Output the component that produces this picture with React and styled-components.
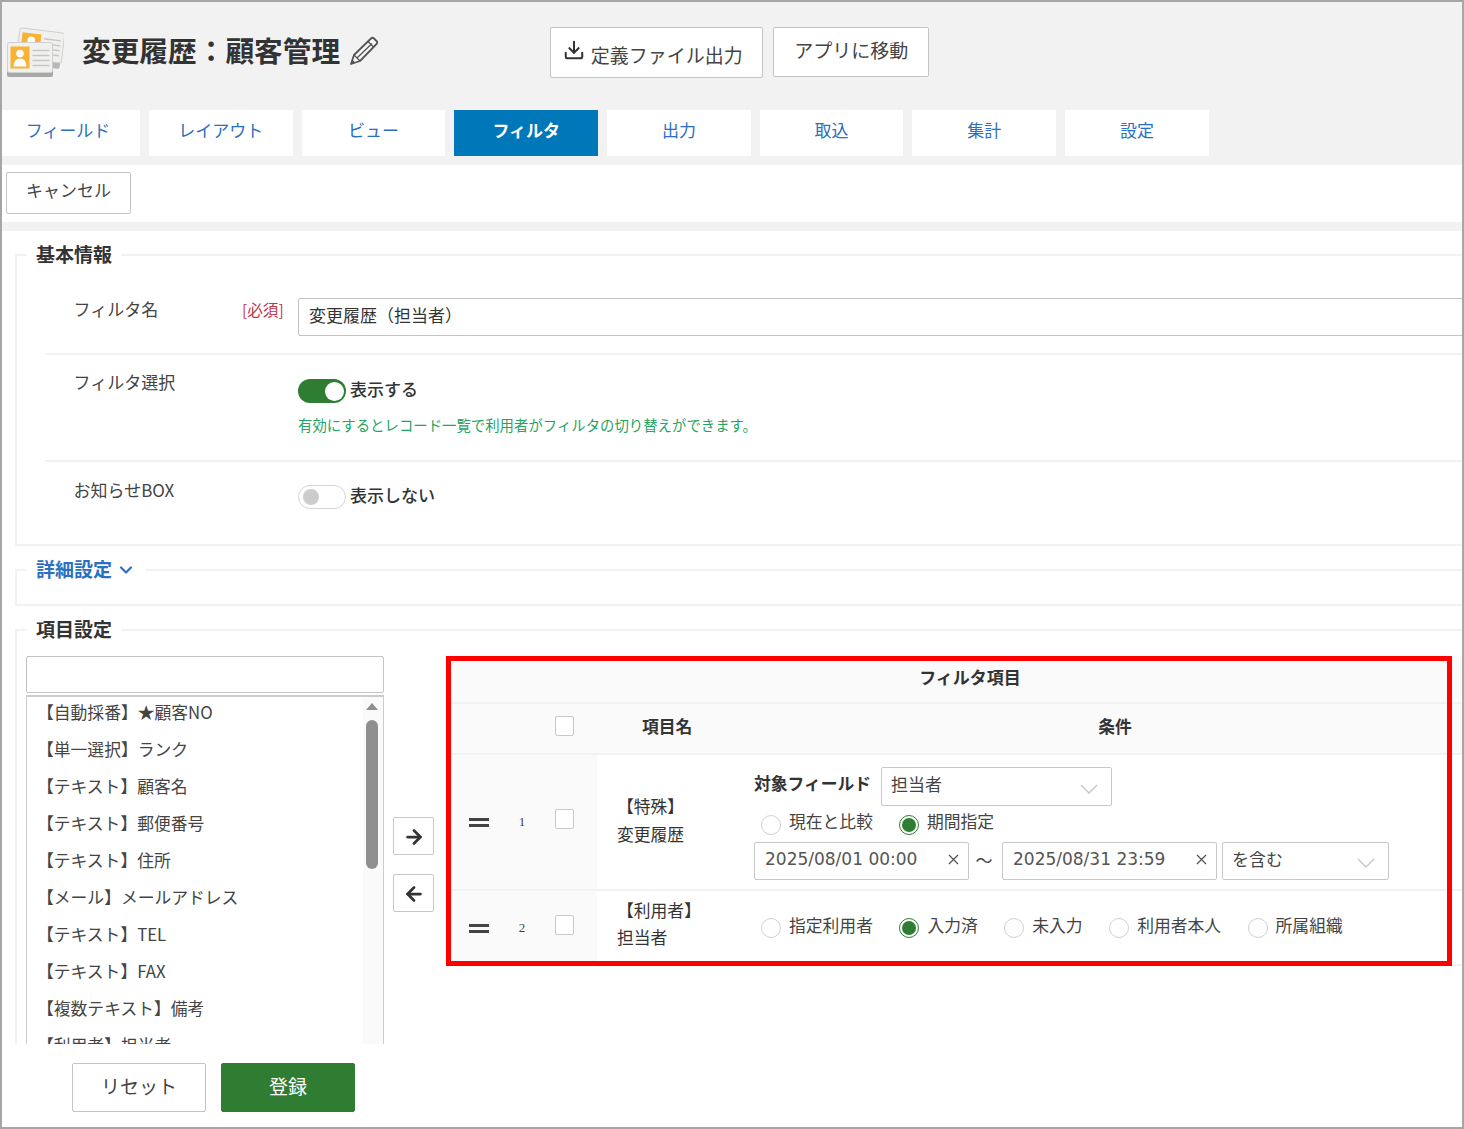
import React from "react"
import styled, { createGlobalStyle } from "styled-components"
import { ArrowLeft, ArrowRight, ChevronDown, Download } from "lucide-react"

const GlobalStyle = createGlobalStyle`
  html, body {
    margin: 0;
    padding: 0;
    background: #fff;
  }
  * {
    box-sizing: border-box;
  }
  body {
    font-family: "Noto Sans CJK JP", "Noto Sans", sans-serif;
    font-size: 17px;
    color: #333;
  }
`

const Page = styled.div`
  width: 1464px;
  height: 1129px;
  border: 2px solid #a6a6a6;
  display: flex;
  flex-direction: column;
  overflow: hidden;
`

const Header = styled.header`
  background: #f2f2f2;
  height: 163px;
  flex: none;
`

const TitleRow = styled.div`
  height: 100px;
  display: flex;
  align-items: center;
  padding-left: 5px;
`

const AppIcon = styled.svg`
  width: 57px;
  height: 50px;
  flex: none;
`

const Title = styled.h1`
  margin: 0 0 4px 18px;
  font-size: 28.7px;
  line-height: 40px;
  font-weight: 700;
  color: #333;
  white-space: nowrap;
`

const PencilIcon = styled.svg`
  width: 30px;
  height: 30px;
  margin: 0 0 3px 9px;
  flex: none;
`

const HeaderActions = styled.div`
  display: flex;
  gap: 10px;
  margin-left: 171px;
`

const Button = styled.button`
  font-family: inherit;
  font-size: ${(p) => p.$size || 19}px;
  line-height: 1;
  height: ${(p) => p.$h || 50}px;
  width: ${(p) => p.$w}px;
  flex: none;
  display: inline-flex;
  align-items: center;
  justify-content: center;
  gap: 6px;
  padding: ${(p) => p.$pad || "0 0 4px"};
  border-radius: 2px;
  border: 1px solid ${(p) => (p.$primary ? "#2e7d32" : "#c4c4c4")};
  background: ${(p) => (p.$primary ? "#2e7d32" : "#fff")};
  color: ${(p) => (p.$primary ? "#fff" : "#444")};

  svg {
    margin-top: -8px;
    flex: none;
  }
`

const Tabs = styled.nav`
  display: flex;
  gap: 9px;
  margin-top: 8px;
`

const Tab = styled.div`
  width: ${(p) => (p.$first ? 138 : 143.7)}px;
  height: 46px;
  display: flex;
  align-items: center;
  justify-content: center;
  padding: 0 ${(p) => (p.$first ? 6 : 0)}px 8px 0;
  font-size: 17px;
  background: ${(p) => (p.$active ? "#0077b9" : "#fff")};
  color: ${(p) => (p.$active ? "#fff" : "#2a6fc0")};
  font-weight: ${(p) => (p.$active ? 700 : 400)};
`

const CancelBar = styled.div`
  height: 66px;
  flex: none;
  padding: 7px 4px 0;
  border-bottom: 9px solid #f2f2f2;
`

const Body = styled.main`
  flex: 1;
  min-height: 0;
  overflow: hidden;
  padding-left: 13px;
`

const Group = styled.fieldset`
  margin: 9px 0 0;
  padding: 0;
  min-width: 0;
  border: 2px solid #f2f2f2;
  border-right: none;
`

const Legend = styled.legend`
  margin-left: 10px;
  padding: 0 9px 4px;
  height: 30px;
  display: flex;
  align-items: center;
  gap: 4px;
  font-size: 19px;
  font-weight: 700;
  color: ${(p) => (p.$link ? "#2a6fc0" : "#333")};

  svg {
    margin-top: 4px;
  }
`

const FormRow = styled.div`
  display: grid;
  grid-template-columns: 197px 56px 1fr;
  margin-left: 28px;
  padding: ${(p) => p.$pad};
  border-bottom: ${(p) => (p.$last ? "none" : "2px solid #f2f2f2")};
`

const RowLabel = styled.div`
  padding-left: 28.5px;
  line-height: 22px;
  font-size: 17px;
  color: #444;
`

const Required = styled.div`
  line-height: 22px;
  font-size: 15.6px;
  color: #c0394b;
`

const TextBox = styled.div`
  height: 38px;
  width: 1200px;
  padding: 0 0 6px 10px;
  display: flex;
  align-items: center;
  border: 1px solid #c4c4c4;
  border-radius: 2px;
  font-size: 17px;
  color: #333;
`

const ToggleLine = styled.div`
  display: flex;
  align-items: flex-start;
  gap: 4px;
  margin-top: ${(p) => p.$top}px;
  font-size: 17px;
  font-weight: 500;
  line-height: 20px;
  color: #333;
`

const Toggle = styled.span`
  width: 48px;
  height: 24px;
  flex: none;
  border-radius: 12px;
  display: flex;
  align-items: center;
  padding: 0 ${(p) => (p.$on ? 2 : 4)}px;
  justify-content: ${(p) => (p.$on ? "flex-end" : "flex-start")};
  background: ${(p) => (p.$on ? "#2e7d32" : "#fff")};
  border: ${(p) => (p.$on ? "none" : "1px solid #d4d4d4")};

  &::after {
    content: "";
    width: ${(p) => (p.$on ? 19 : 16)}px;
    height: ${(p) => (p.$on ? 19 : 16)}px;
    border-radius: 50%;
    background: ${(p) => (p.$on ? "#fff" : "#ccc")};
  }
`

const Help = styled.div`
  margin-top: 12px;
  font-size: 14.4px;
  line-height: 20px;
  color: #1fa463;
  white-space: nowrap;
`

const DetailBody = styled.div`
  height: 19px;
`

const ItemsLayout = styled.div`
  display: flex;
  align-items: flex-start;
  padding: 11px 0 0 9px;
  height: 500px;
`

const FieldPicker = styled.div`
  width: 358px;
  flex: none;
`

const SearchBox = styled.div`
  height: 37px;
  border: 1px solid #c4c4c4;
  border-radius: 2px;
`

const FieldList = styled.div`
  margin-top: 2px;
  height: 440px;
  display: flex;
  border: 1px solid #ccc;
  border-bottom: none;
  border-top-width: 2px;
`

const FieldItems = styled.ul`
  flex: 1;
  margin: 0;
  padding: 0 0 0 10px;
  list-style: none;
`

const FieldItem = styled.li`
  height: 37px;
  line-height: 31px;
  font-size: 16.8px;
  color: #444;
  white-space: nowrap;
`

const Scrollbar = styled.div`
  width: 20px;
  flex: none;
  background: #fafafa;
  padding: 6px 5px 0 3px;
  display: flex;
  flex-direction: column;
  align-items: center;
`

const ScrollUp = styled.span`
  width: 0;
  height: 0;
  border-left: 6px solid transparent;
  border-right: 6px solid transparent;
  border-bottom: 7px solid #8f8f8f;
`

const ScrollThumb = styled.span`
  width: 12px;
  height: 149px;
  margin-top: 10px;
  border-radius: 6px;
  background: #8f8f8f;
`

const MoveButtons = styled.div`
  width: 41px;
  margin: 161px 0 0 9px;
  flex: none;
  display: flex;
  flex-direction: column;
  gap: 19px;
`

const MoveButton = styled.button`
  width: 41px;
  height: 38px;
  padding: 2px 0 0;
  display: flex;
  align-items: center;
  justify-content: center;
  background: #fff;
  border: 1px solid #c8c8c8;
  border-radius: 2px;
  color: #333;
`

const FilterTable = styled.div`
  position: relative;
  flex: 1;
  margin-left: 12px;
  min-width: 0;
`

const RedFrame = styled.div`
  position: absolute;
  top: 0;
  left: 0;
  width: 1006px;
  height: 310px;
  border: 5px solid #ff0000;
  pointer-events: none;
`

const CaptionRow = styled.div`
  height: 48px;
  background: #fafafa;
  border-bottom: 2px solid #f2f2f2;
  padding: 0 0 6px 32px;
  display: flex;
  align-items: center;
  justify-content: center;
  font-size: 17px;
  font-weight: 700;
  color: #333;
`

const TableRow = styled.div`
  display: grid;
  grid-template-columns: 151px 157px 1fr;
  height: ${(p) => p.$h}px;
  background: ${(p) => (p.$head ? "#fafafa" : "#fff")};
  border-bottom: 2px solid #f2f2f2;
`

const HandleCell = styled.div`
  background: #fafafa;
  display: flex;
  align-items: center;
  padding-left: ${(p) => p.$left || 23}px;
`

const DragHandle = styled.span`
  width: 20px;
  height: 9px;
  margin-top: 1px;
  flex: none;
  border-top: 3px solid #444;
  border-bottom: 3px solid #444;
`

const RowNumber = styled.span`
  width: 66px;
  flex: none;
  text-align: center;
  font-family: "Liberation Serif", serif;
  font-size: 13px;
  color: #444;
`

const CheckBox = styled.span`
  width: 19px;
  height: 20px;
  flex: none;
  border: 1px solid #c8c8c8;
  border-radius: 2px;
  background: #fff;
  margin-top: -6px;
`

const NameCell = styled.div`
  display: flex;
  flex-direction: column;
  justify-content: center;
  padding: 0 0 ${(p) => p.$shift}px 20px;
  font-size: 16.8px;
  line-height: ${(p) => p.$lh}px;
  color: #333;
  white-space: nowrap;
`

const HeadName = styled.div`
  display: flex;
  align-items: center;
  padding: 0 0 6px 45px;
  font-size: 16.8px;
  font-weight: 700;
`

const HeadCondition = styled.div`
  display: flex;
  align-items: center;
  justify-content: center;
  padding: 0 0 6px 14px;
  font-size: 16.8px;
  font-weight: 700;
`

const ConditionCell = styled.div`
  padding-top: ${(p) => p.$top || 0}px;
  display: flex;
  flex-direction: column;
  justify-content: ${(p) => (p.$center ? "center" : "flex-start")};
`

const ConditionLine = styled.div`
  display: flex;
  align-items: center;
  gap: ${(p) => p.$gap || 0}px;
  height: ${(p) => p.$h}px;
  padding-left: ${(p) => p.$left || 0}px;
`

const FieldLabel = styled.span`
  width: 127px;
  padding-bottom: 8px;
  font-size: 16.8px;
  font-weight: 700;
  color: #333;
  white-space: nowrap;
`

const SelectBox = styled.div`
  width: ${(p) => p.$w}px;
  height: ${(p) => p.$h}px;
  margin-left: ${(p) => p.$left || 0}px;
  flex: none;
  display: flex;
  align-items: center;
  justify-content: space-between;
  padding: 0 13px 6px 9px;
  border: 1px solid #c8c8c8;
  border-radius: 2px;
  font-size: 17px;
  color: #444;
`

const SelectArrow = styled.svg`
  width: 18px;
  height: 10px;
  margin-top: 10px;
  flex: none;
`

const RadioItem = styled.span`
  display: inline-flex;
  align-items: center;
  font-size: 16.8px;
  color: #444;
  white-space: nowrap;
`

const RadioMark = styled.span`
  width: 20px;
  height: 20px;
  margin: 1px 8px 0 0;
  flex: none;
  border-radius: 50%;
  background: #fff;
  border: ${(p) => (p.$on ? "1px solid #2e7d32" : "1px solid #d0d0d0")};
  display: flex;
  align-items: center;
  justify-content: center;

  &::after {
    content: "";
    width: 14px;
    height: 14px;
    border-radius: 50%;
    background: ${(p) => (p.$on ? "#2e7d32" : "transparent")};
  }
`

const RadioText = styled.span`
  padding-bottom: 6px;
`

const DateBox = styled.div`
  width: 215px;
  height: 38px;
  flex: none;
  display: flex;
  align-items: center;
  justify-content: space-between;
  padding: 0 9px 4px 10px;
  border: 1px solid #c8c8c8;
  border-radius: 2px;
  font-family: "DejaVu Sans", sans-serif;
  font-size: 17px;
  color: #555;
`

const ClearMark = styled.svg`
  width: 11px;
  height: 11px;
  flex: none;
`

const Tilde = styled.span`
  width: 33px;
  padding: 0 3px 4px 0;
  flex: none;
  text-align: center;
  font-size: 17px;
  color: #444;
`

const Footer = styled.footer`
  height: 83px;
  flex: none;
  display: flex;
  gap: 15px;
  padding: 19px 0 0 70px;
  background: #fff;
`

const Radio = ({ on, children }) => (
  <RadioItem>
    <RadioMark $on={on} />
    <RadioText>{children}</RadioText>
  </RadioItem>
)

const Arrow = () => (
  <SelectArrow viewBox="0 0 18 10">
    <polyline points="1,1 9,9 17,1" fill="none" stroke="#c4c4c4" strokeWidth="1.3" />
  </SelectArrow>
)

const Clear = () => (
  <ClearMark viewBox="0 0 11 11">
    <path d="M1 1 L10 10 M10 1 L1 10" stroke="#555" strokeWidth="1.3" />
  </ClearMark>
)

const tabNames = ["フィールド", "レイアウト", "ビュー", "フィルタ", "出力", "取込", "集計", "設定"]

const fieldNames = [
  "【自動採番】★顧客NO",
  "【単一選択】ランク",
  "【テキスト】顧客名",
  "【テキスト】郵便番号",
  "【テキスト】住所",
  "【メール】メールアドレス",
  "【テキスト】TEL",
  "【テキスト】FAX",
  "【複数テキスト】備考",
  "【利用者】担当者",
]

const Card = ({ x, y }) => (
  <g transform={`translate(${x} ${y})`}>
    <rect x="0" y="0" width="45" height="30" rx="2" fill="#f0f0ee" stroke="#d0d0ce" />
    <rect x="3" y="4" width="19" height="22" fill="#f9b233" />
    <circle cx="12.5" cy="11" r="3.8" fill="#fff" />
    <path d="M6 24 Q6.5 16 12.5 16 Q18.5 16 19 24 Z" fill="#fff" />
    <path d="M25 8 H42 M25 13 H42 M25 18 H42 M25 23 H42" stroke="#c6c6c6" strokeWidth="1.4" />
  </g>
)

const App = () => (
  <Page>
    <GlobalStyle />
    <Header>
      <TitleRow>
        <AppIcon viewBox="0 0 57 50">
          <g transform="rotate(7 38 20)">
            <rect x="12" y="7" width="43" height="33" rx="2" fill="#b8b8b8" />
            <Card x="11" y="4" />
          </g>
          <rect x="0" y="18" width="46" height="32" rx="2" fill="#a8a8a8" />
          <Card x="0.5" y="15.5" />
        </AppIcon>
        <Title>変更履歴：顧客管理</Title>
        <PencilIcon viewBox="0 0 30 30">
          <path d="M2 28 L5 19 L22 2.5 Q23.5 1 25 2.5 L27.5 5 Q29 6.5 27.5 8 L11 25 Z" fill="#f7f7f7" stroke="#555" strokeWidth="1.8" strokeLinejoin="round" />
          <path d="M5 19 L11 25 M19 5.5 L24.5 11 M8.5 21.5 L23 7.5" fill="none" stroke="#555" strokeWidth="1.3" />
          <path d="M2 28 L3.3 23.6 L6.4 26.7 Z" fill="#555" />
        </PencilIcon>
        <HeaderActions>
          <Button $w={213} $h={51} $pad="4px 8px 0 0">
            <Download size={22} strokeWidth={2.2} color="#333" />
            定義ファイル出力
          </Button>
          <Button $w={156} $h={50} $pad="0 0 5px">アプリに移動</Button>
        </HeaderActions>
      </TitleRow>
      <Tabs>
        {tabNames.map((name, i) => (
          <Tab key={name} $first={i === 0} $active={name === "フィルタ"}>
            {name}
          </Tab>
        ))}
      </Tabs>
    </Header>
    <CancelBar>
      <Button $w={125} $h={42} $size={17} $pad="0 0 7px">キャンセル</Button>
    </CancelBar>
    <Body>
      <Group>
        <Legend>基本情報</Legend>
        <FormRow $pad="28px 0 17px">
          <RowLabel>フィルタ名</RowLabel>
          <Required>[必須]</Required>
          <TextBox>変更履歴（担当者）</TextBox>
        </FormRow>
        <FormRow $pad="16px 0 25px">
          <RowLabel>フィルタ選択</RowLabel>
          <div />
          <div>
            <ToggleLine $top={8}>
              <Toggle $on />
              表示する
            </ToggleLine>
            <Help>有効にするとレコード一覧で利用者がフィルタの切り替えができます。</Help>
          </div>
        </FormRow>
        <FormRow $pad="17px 0 35px" $last>
          <RowLabel>お知らせBOX</RowLabel>
          <div />
          <ToggleLine $top={6}>
            <Toggle />
            表示しない
          </ToggleLine>
        </FormRow>
      </Group>
      <Group>
        <Legend $link>
          詳細設定
          <ChevronDown size={20} strokeWidth={2.6} />
        </Legend>
        <DetailBody />
      </Group>
      <Group>
        <Legend>項目設定</Legend>
        <ItemsLayout>
          <FieldPicker>
            <SearchBox />
            <FieldList>
              <FieldItems>
                {fieldNames.map((name) => (
                  <FieldItem key={name}>{name}</FieldItem>
                ))}
              </FieldItems>
              <Scrollbar>
                <ScrollUp />
                <ScrollThumb />
              </Scrollbar>
            </FieldList>
          </FieldPicker>
          <MoveButtons>
            <MoveButton>
              <ArrowRight size={22} strokeWidth={3} />
            </MoveButton>
            <MoveButton>
              <ArrowLeft size={22} strokeWidth={3} />
            </MoveButton>
          </MoveButtons>
          <FilterTable>
            <CaptionRow>フィルタ項目</CaptionRow>
            <TableRow $head $h={51}>
              <HandleCell $left={109}>
                <CheckBox />
              </HandleCell>
              <HeadName>項目名</HeadName>
              <HeadCondition>条件</HeadCondition>
            </TableRow>
            <TableRow $h={136}>
              <HandleCell>
                <DragHandle />
                <RowNumber>1</RowNumber>
                <CheckBox />
              </HandleCell>
              <NameCell $lh={28} $shift={4}>
                <div>【特殊】</div>
                <div>変更履歴</div>
              </NameCell>
              <ConditionCell $top={12}>
                <ConditionLine $h={39}>
                  <FieldLabel>対象フィールド</FieldLabel>
                  <SelectBox $w={231} $h={39}>
                    担当者
                    <Arrow />
                  </SelectBox>
                </ConditionLine>
                <ConditionLine $h={36} $left={7} $gap={26}>
                  <Radio>現在と比較</Radio>
                  <Radio on>期間指定</Radio>
                </ConditionLine>
                <ConditionLine $h={38}>
                  <DateBox>
                    2025/08/01 00:00
                    <Clear />
                  </DateBox>
                  <Tilde>～</Tilde>
                  <DateBox>
                    2025/08/31 23:59
                    <Clear />
                  </DateBox>
                  <SelectBox $w={167} $h={38} $left={5}>
                    を含む
                    <Arrow />
                  </SelectBox>
                </ConditionLine>
              </ConditionCell>
            </TableRow>
            <TableRow $h={75}>
              <HandleCell>
                <DragHandle />
                <RowNumber>2</RowNumber>
                <CheckBox />
              </HandleCell>
              <NameCell $lh={27} $shift={8}>
                <div>【利用者】</div>
                <div>担当者</div>
              </NameCell>
              <ConditionCell $center>
                <ConditionLine $h={36} $left={7} $gap={26.5}>
                  <Radio>指定利用者</Radio>
                  <Radio on>入力済</Radio>
                  <Radio>未入力</Radio>
                  <Radio>利用者本人</Radio>
                  <Radio>所属組織</Radio>
                </ConditionLine>
              </ConditionCell>
            </TableRow>
            <RedFrame />
          </FilterTable>
        </ItemsLayout>
      </Group>
    </Body>
    <Footer>
      <Button $w={134} $h={49}>リセット</Button>
      <Button $w={134} $h={49} $primary>登録</Button>
    </Footer>
  </Page>
)

export default App
